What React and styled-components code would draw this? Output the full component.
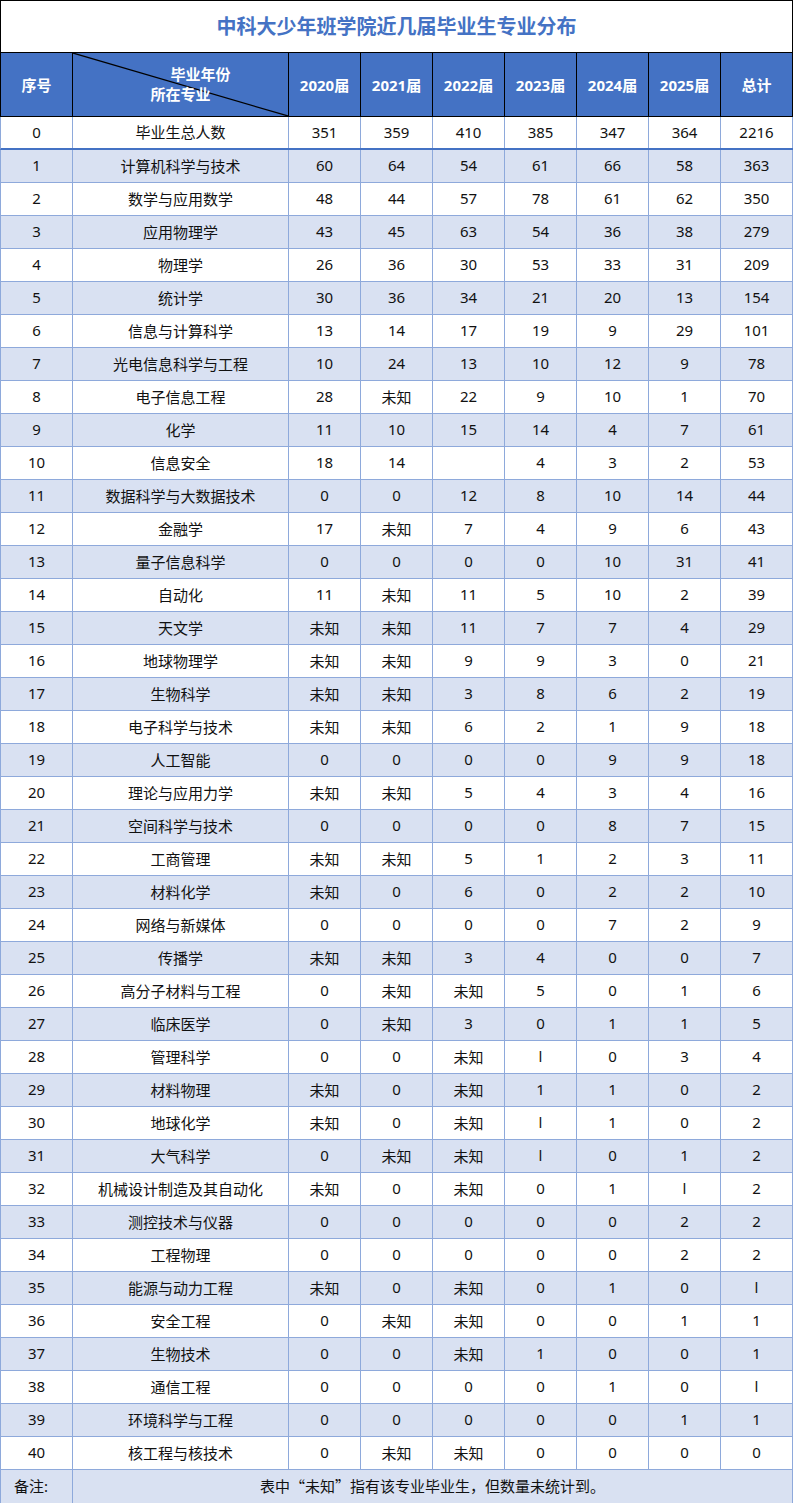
import React from "react";
import styled, { createGlobalStyle } from "styled-components";

const Global = createGlobalStyle`
  html, body { margin: 0; padding: 0; background: #ffffff; }
  body { font-family: "Noto Sans", "Noto Sans CJK SC", sans-serif; }
`;

const BLUE = "#4472C4";
const LIGHT = "#D9E1F2";
const LINE = "#8EA9DB";

const Sheet = styled.div`
  width: 793px;
  display: flex;
  flex-direction: column;
`;

const Title = styled.div`
  box-sizing: border-box;
  height: 53px;
  border: 1px solid #000;
  display: flex;
  align-items: center;
  justify-content: center;
  padding-bottom: 2px;
  color: ${BLUE};
  font-weight: 700;
  font-size: 20px;
`;

const Row = styled.div`
  box-sizing: border-box;
  display: grid;
  grid-template-columns: 72px 216px repeat(7, 72px);
  height: ${(p) => p.$h}px;
  background: ${(p) => p.$bg};
  border-left: 1px solid ${(p) => p.$line};
  border-bottom: ${(p) => p.$bw || 1}px solid ${(p) => p.$bottom || p.$line};
`;

const Cell = styled.div`
  position: relative;
  box-sizing: border-box;
  border-right: 1px solid ${(p) => p.$line};
  display: flex;
  align-items: center;
  justify-content: ${(p) => (p.$left ? "flex-start" : "center")};
  padding-left: ${(p) => (p.$left ? "13px" : "0")};
  padding-bottom: 2px;
  grid-column: ${(p) => (p.$span ? `span ${p.$span}` : "auto")};
  font-size: 15px;
  color: #111;
  white-space: nowrap;
`;

const NoteCell = styled(Cell)`
  font-family: "Noto Sans CJK SC", sans-serif;
  padding-bottom: 3px;
`;

const HeadCell = styled(Cell)`
  color: #ffffff;
  font-weight: 700;
  font-size: 15px;
  padding-bottom: 1px;
`;

const DiagWrap = styled.div`
  display: flex;
  flex-direction: column;
  align-items: center;
  line-height: 20px;
  margin-top: -1px;
`;

const DiagLine = styled.span`
  transform: translateX(${(p) => p.$dx}px);
`;

const Diagonal = styled.svg`
  position: absolute;
  inset: 0;
  width: 100%;
  height: 100%;
  pointer-events: none;
`;

const years = ["2020届", "2021届", "2022届", "2023届", "2024届", "2025届", "总计"];

const total = ["0", "毕业生总人数", "351", "359", "410", "385", "347", "364", "2216"];

const rows = [
  ["计算机科学与技术", "60", "64", "54", "61", "66", "58", "363"],
  ["数学与应用数学", "48", "44", "57", "78", "61", "62", "350"],
  ["应用物理学", "43", "45", "63", "54", "36", "38", "279"],
  ["物理学", "26", "36", "30", "53", "33", "31", "209"],
  ["统计学", "30", "36", "34", "21", "20", "13", "154"],
  ["信息与计算科学", "13", "14", "17", "19", "9", "29", "101"],
  ["光电信息科学与工程", "10", "24", "13", "10", "12", "9", "78"],
  ["电子信息工程", "28", "未知", "22", "9", "10", "1", "70"],
  ["化学", "11", "10", "15", "14", "4", "7", "61"],
  ["信息安全", "18", "14", "", "4", "3", "2", "53"],
  ["数据科学与大数据技术", "0", "0", "12", "8", "10", "14", "44"],
  ["金融学", "17", "未知", "7", "4", "9", "6", "43"],
  ["量子信息科学", "0", "0", "0", "0", "10", "31", "41"],
  ["自动化", "11", "未知", "11", "5", "10", "2", "39"],
  ["天文学", "未知", "未知", "11", "7", "7", "4", "29"],
  ["地球物理学", "未知", "未知", "9", "9", "3", "0", "21"],
  ["生物科学", "未知", "未知", "3", "8", "6", "2", "19"],
  ["电子科学与技术", "未知", "未知", "6", "2", "1", "9", "18"],
  ["人工智能", "0", "0", "0", "0", "9", "9", "18"],
  ["理论与应用力学", "未知", "未知", "5", "4", "3", "4", "16"],
  ["空间科学与技术", "0", "0", "0", "0", "8", "7", "15"],
  ["工商管理", "未知", "未知", "5", "1", "2", "3", "11"],
  ["材料化学", "未知", "0", "6", "0", "2", "2", "10"],
  ["网络与新媒体", "0", "0", "0", "0", "7", "2", "9"],
  ["传播学", "未知", "未知", "3", "4", "0", "0", "7"],
  ["高分子材料与工程", "0", "未知", "未知", "5", "0", "1", "6"],
  ["临床医学", "0", "未知", "3", "0", "1", "1", "5"],
  ["管理科学", "0", "0", "未知", "l", "0", "3", "4"],
  ["材料物理", "未知", "0", "未知", "1", "1", "0", "2"],
  ["地球化学", "未知", "0", "未知", "l", "1", "0", "2"],
  ["大气科学", "0", "未知", "未知", "l", "0", "1", "2"],
  ["机械设计制造及其自动化", "未知", "0", "未知", "0", "1", "l", "2"],
  ["测控技术与仪器", "0", "0", "0", "0", "0", "2", "2"],
  ["工程物理", "0", "0", "0", "0", "0", "2", "2"],
  ["能源与动力工程", "未知", "0", "未知", "0", "1", "0", "l"],
  ["安全工程", "0", "未知", "未知", "0", "0", "1", "1"],
  ["生物技术", "0", "0", "未知", "1", "0", "0", "1"],
  ["通信工程", "0", "0", "0", "0", "1", "0", "l"],
  ["环境科学与工程", "0", "0", "0", "0", "0", "1", "1"],
  ["核工程与核技术", "0", "未知", "未知", "0", "0", "0", "0"],
];

export default function App() {
  return (
    <>
      <Global />
      <Sheet lang="zh-CN">
        <Title>中科大少年班学院近几届毕业生专业分布</Title>

        <Row $h={64} $bg={BLUE} $line="#000">
          <HeadCell $line="#000">序号</HeadCell>
          <HeadCell $line="#000">
            <Diagonal viewBox="0 0 215 63" preserveAspectRatio="none">
              <line x1="0" y1="0" x2="215" y2="63" stroke="#000" strokeWidth="1.2" />
            </Diagonal>
            <DiagWrap>
              <DiagLine $dx={20}>毕业年份</DiagLine>
              <DiagLine $dx={0}>所在专业</DiagLine>
            </DiagWrap>
          </HeadCell>
          {years.map((y) => (
            <HeadCell key={y} $line="#000">
              {y}
            </HeadCell>
          ))}
        </Row>

        <Row $h={33} $bg="#ffffff" $line={LINE} $bw={2} $bottom={BLUE}>
          {total.map((v, i) => (
            <Cell key={i} $line={LINE}>
              {v}
            </Cell>
          ))}
        </Row>

        {rows.map((r, idx) => {
          const n = idx + 1;
          return (
            <Row key={n} $h={33} $bg={n % 2 === 1 ? LIGHT : "#ffffff"} $line={LINE}>
              <Cell $line={LINE}>{n}</Cell>
              {r.map((v, i) => (
                <Cell key={i} $line={LINE}>
                  {v}
                </Cell>
              ))}
            </Row>
          );
        })}

        <Row $h={34} $bg={LIGHT} $line={LINE} $bottom="#7F9FDB">
          <Cell $line={LINE} $left>
            备注:
          </Cell>
          <NoteCell $line={LINE} $span={8}>
            表中“未知”指有该专业毕业生，但数量未统计到。
          </NoteCell>
        </Row>
      </Sheet>
    </>
  );
}
